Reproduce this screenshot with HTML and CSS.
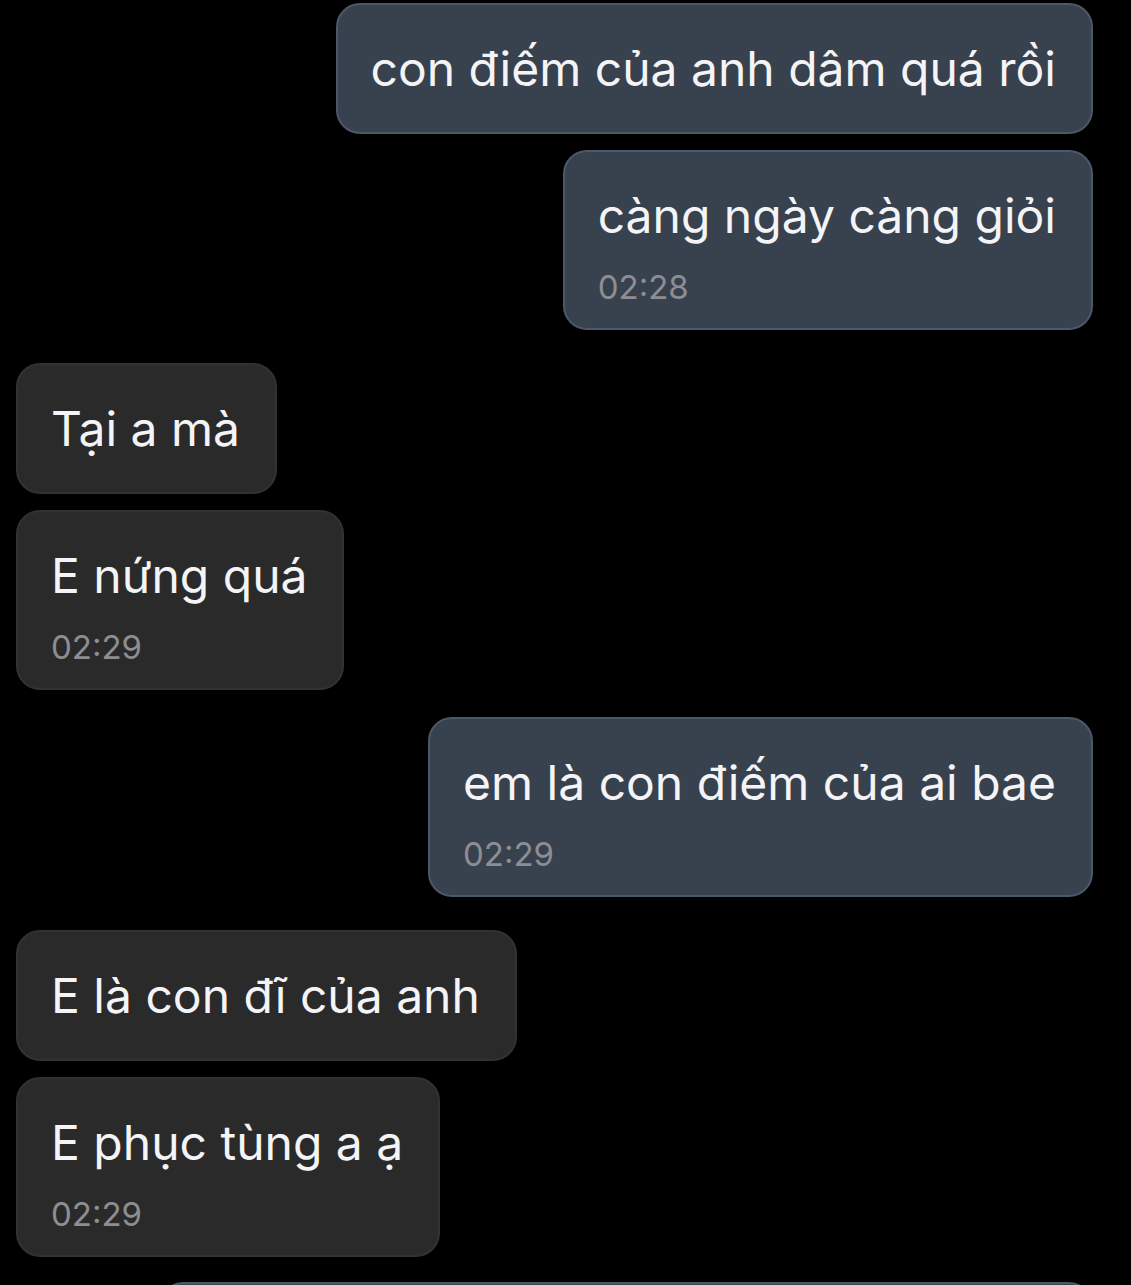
FILE: index.html
```html
<!DOCTYPE html>
<html lang="vi">
<head>
<meta charset="utf-8">
<title>Chat</title>
<link rel="stylesheet" href="styles.css">
</head>
<body>
<main class="chat">
  <section class="group out">
    <div class="bubble"><p class="text">con điếm của anh dâm quá rồi</p></div>
    <div class="bubble timed"><p class="text">càng ngày càng giỏi</p><span class="time">02:28</span></div>
  </section>
  <section class="group in gap-a">
    <div class="bubble"><p class="text">Tại a mà</p></div>
    <div class="bubble timed"><p class="text">E nứng quá</p><span class="time">02:29</span></div>
  </section>
  <section class="group out gap-b">
    <div class="bubble timed"><p class="text">em là con điếm của ai bae</p><span class="time">02:29</span></div>
  </section>
  <section class="group in gap-a">
    <div class="bubble"><p class="text">E là con đĩ của anh</p></div>
    <div class="bubble timed"><p class="text">E phục tùng a ạ</p><span class="time">02:29</span></div>
  </section>
  <section class="group out gap-c">
    <div class="bubble wide"><p class="text">&nbsp;</p></div>
  </section>
</main>
</body>
</html>
```

FILE: styles.css
```css
html, body {
  margin: 0;
  padding: 0;
  background: #000;
  height: 100%;
  overflow: hidden;
}

body {
  font-family: Inter, "Noto Sans", "Liberation Sans", sans-serif;
  color: #f4f4f6;
}

.chat {
  display: flex;
  flex-direction: column;
  padding: 3px 38px 0 16px;
}

.group {
  display: flex;
  flex-direction: column;
  gap: 16px;
}

.group.out { align-items: flex-end; }
.group.in { align-items: flex-start; }

.gap-a { margin-top: 33px; }
.gap-b { margin-top: 27px; }
.gap-c { margin-top: 25px; }

.bubble {
  box-sizing: border-box;
  border-radius: 24px;
  padding: 34px 35px 34px 33px;
  display: flex;
  flex-direction: column;
  align-items: flex-start;
}

.out .bubble {
  background: #38414e;
  border: 2px solid #4c5768;
}

.in .bubble {
  background: #2a2a2a;
  border: 2px solid #323232;
}

.bubble.timed { padding-bottom: 22px; }

.bubble.wide { width: 934px; }

.text {
  margin: 0;
  font-size: 48px;
  line-height: 59px;
  white-space: nowrap;
}

.time {
  margin-top: 23px;
  font-size: 33px;
  line-height: 38px;
  color: #8d8d92;
}
```
